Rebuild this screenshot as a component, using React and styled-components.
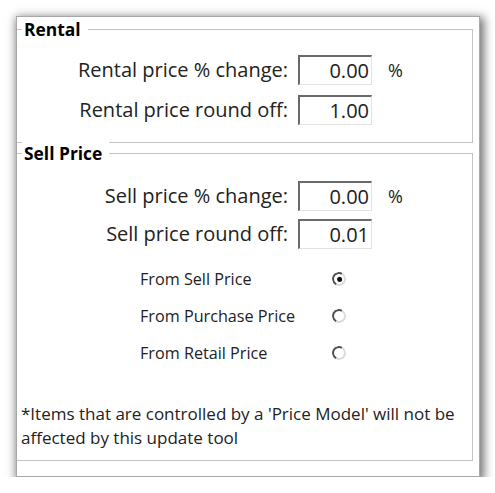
import React from "react";
import styled, { createGlobalStyle } from "styled-components";

const Global = createGlobalStyle`
  html, body { margin: 0; padding: 0; background: #ffffff; }
  body { font-family: "Open Sans", "Noto Sans", sans-serif; color: #1e1e1e; }
`;

const Window = styled.div`
  box-sizing: border-box;
  margin: 16px 0 0 16px;
  width: 464px;
  height: 461px;
  background: #ffffff;
  border: 1px solid #a8a8a8;
  box-shadow: 2px 3px 9px 2px rgba(0, 0, 0, 0.55);
  display: flex;
  flex-direction: column;
`;

const Group = styled.div`
  position: relative;
  box-sizing: border-box;
  margin: ${(p) => p.$mt}px 6px 0 0;
  height: ${(p) => p.$h}px;
  border: 1px solid #c4c4c4;
  border-left: none;
  display: flex;
  flex-direction: column;
  padding-top: ${(p) => p.$pt}px;
`;

const Legend = styled.span`
  position: absolute;
  top: -12px;
  left: 5px;
  padding: 0 7px 0 2px;
  background: #ffffff;
  font-weight: 700;
  font-size: 17.4px;
  line-height: 22px;
  color: #000;
`;

const FieldGrid = styled.div`
  display: grid;
  grid-template-columns: 271px 74px auto;
  column-gap: 10px;
  row-gap: ${(p) => p.$gap}px;
  align-items: center;
`;

const FieldLabel = styled.span`
  justify-self: end;
  font-size: 20px;
  line-height: 30px;
  color: #222;
  white-space: nowrap;
`;

const NumBox = styled.div`
  box-sizing: border-box;
  height: 30px;
  border-top: 2px solid #6a6a6a;
  border-left: 2px solid #6a6a6a;
  border-right: 1px solid #e2e2e2;
  border-bottom: 1px solid #e2e2e2;
  background: #fff;
  font-size: 20px;
  line-height: 27px;
  text-align: right;
  padding-right: 2px;
  color: #202020;
`;

const Unit = styled.span`
  font-size: 18px;
  padding-left: 6px;
  color: #222;
`;

const RadioList = styled.div`
  display: flex;
  flex-direction: column;
  margin-top: 11px;
`;

const RadioRow = styled.div`
  display: grid;
  grid-template-columns: 192px 14px;
  align-items: center;
  height: 37px;
  padding-left: 123px;
`;

const RadioLabel = styled.span`
  font-size: 16.2px;
  color: #222;
  white-space: nowrap;
`;

const RadioDot = styled.span`
  box-sizing: border-box;
  width: 14px;
  height: 14px;
  border-radius: 50%;
  border: 2px solid;
  border-color: #505050 #dcdcdc #dcdcdc #505050;
  transform: rotate(-15deg);
  display: flex;
  align-items: center;
  justify-content: center;
  &::after {
    content: "";
    width: 5px;
    height: 5px;
    border-radius: 50%;
    background: ${(p) => (p.$on ? "#111" : "transparent")};
  }
`;

const Note = styled.p`
  margin: 31px 0 0 4px;
  font-size: 17px;
  line-height: 24px;
  color: #222;
`;

const Field = ({ label, value, unit }) => (
  <>
    <FieldLabel>{label}</FieldLabel>
    <NumBox>{value}</NumBox>
    <Unit>{unit || ""}</Unit>
  </>
);

export default function App() {
  return (
    <>
      <Global />
      <Window>
        <Group $mt={12} $h={114} $pt={25}>
          <Legend>Rental</Legend>
          <FieldGrid $gap={10}>
            <Field label="Rental price % change:" value="0.00" unit="%" />
            <Field label="Rental price round off:" value="1.00" />
          </FieldGrid>
        </Group>
        <Group $mt={10} $h={308} $pt={27}>
          <Legend>Sell Price</Legend>
          <FieldGrid $gap={8}>
            <Field label="Sell price % change:" value="0.00" unit="%" />
            <Field label="Sell price round off:" value="0.01" />
          </FieldGrid>
          <RadioList>
            <RadioRow>
              <RadioLabel>From Sell Price</RadioLabel>
              <RadioDot $on />
            </RadioRow>
            <RadioRow>
              <RadioLabel>From Purchase Price</RadioLabel>
              <RadioDot />
            </RadioRow>
            <RadioRow>
              <RadioLabel>From Retail Price</RadioLabel>
              <RadioDot />
            </RadioRow>
          </RadioList>
          <Note>
            *Items that are controlled by a 'Price Model' will not be
            <br />
            affected by this update tool
          </Note>
        </Group>
      </Window>
    </>
  );
}
